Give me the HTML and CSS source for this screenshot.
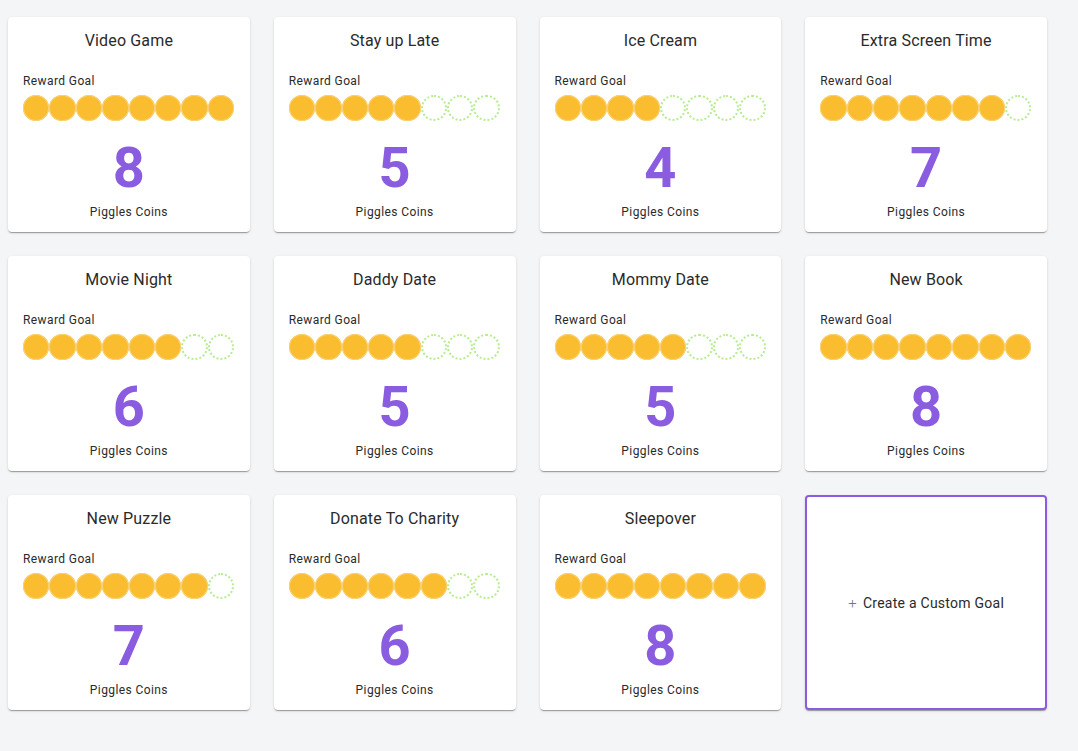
FILE: index.html
```html
<!DOCTYPE html>
<html>
<head>
<meta charset="utf-8">
<link rel="stylesheet" href="styles.css">
</head>
<body>
<div class="grid">
  <div class="card"><div class="title">Video Game</div><div class="label">Reward Goal</div><div class="coins"><span class="coin"></span><span class="coin"></span><span class="coin"></span><span class="coin"></span><span class="coin"></span><span class="coin"></span><span class="coin"></span><span class="coin"></span></div><div class="num">8</div><div class="unit">Piggles Coins</div></div>
  <div class="card"><div class="title">Stay up Late</div><div class="label">Reward Goal</div><div class="coins"><span class="coin"></span><span class="coin"></span><span class="coin"></span><span class="coin"></span><span class="coin"></span><span class="coin empty"></span><span class="coin empty"></span><span class="coin empty"></span></div><div class="num">5</div><div class="unit">Piggles Coins</div></div>
  <div class="card"><div class="title">Ice Cream</div><div class="label">Reward Goal</div><div class="coins"><span class="coin"></span><span class="coin"></span><span class="coin"></span><span class="coin"></span><span class="coin empty"></span><span class="coin empty"></span><span class="coin empty"></span><span class="coin empty"></span></div><div class="num">4</div><div class="unit">Piggles Coins</div></div>
  <div class="card"><div class="title">Extra Screen Time</div><div class="label">Reward Goal</div><div class="coins"><span class="coin"></span><span class="coin"></span><span class="coin"></span><span class="coin"></span><span class="coin"></span><span class="coin"></span><span class="coin"></span><span class="coin empty"></span></div><div class="num">7</div><div class="unit">Piggles Coins</div></div>
  <div class="card"><div class="title">Movie Night</div><div class="label">Reward Goal</div><div class="coins"><span class="coin"></span><span class="coin"></span><span class="coin"></span><span class="coin"></span><span class="coin"></span><span class="coin"></span><span class="coin empty"></span><span class="coin empty"></span></div><div class="num">6</div><div class="unit">Piggles Coins</div></div>
  <div class="card"><div class="title">Daddy Date</div><div class="label">Reward Goal</div><div class="coins"><span class="coin"></span><span class="coin"></span><span class="coin"></span><span class="coin"></span><span class="coin"></span><span class="coin empty"></span><span class="coin empty"></span><span class="coin empty"></span></div><div class="num">5</div><div class="unit">Piggles Coins</div></div>
  <div class="card"><div class="title">Mommy Date</div><div class="label">Reward Goal</div><div class="coins"><span class="coin"></span><span class="coin"></span><span class="coin"></span><span class="coin"></span><span class="coin"></span><span class="coin empty"></span><span class="coin empty"></span><span class="coin empty"></span></div><div class="num">5</div><div class="unit">Piggles Coins</div></div>
  <div class="card"><div class="title">New Book</div><div class="label">Reward Goal</div><div class="coins"><span class="coin"></span><span class="coin"></span><span class="coin"></span><span class="coin"></span><span class="coin"></span><span class="coin"></span><span class="coin"></span><span class="coin"></span></div><div class="num">8</div><div class="unit">Piggles Coins</div></div>
  <div class="card"><div class="title">New Puzzle</div><div class="label">Reward Goal</div><div class="coins"><span class="coin"></span><span class="coin"></span><span class="coin"></span><span class="coin"></span><span class="coin"></span><span class="coin"></span><span class="coin"></span><span class="coin empty"></span></div><div class="num">7</div><div class="unit">Piggles Coins</div></div>
  <div class="card"><div class="title">Donate To Charity</div><div class="label">Reward Goal</div><div class="coins"><span class="coin"></span><span class="coin"></span><span class="coin"></span><span class="coin"></span><span class="coin"></span><span class="coin"></span><span class="coin empty"></span><span class="coin empty"></span></div><div class="num">6</div><div class="unit">Piggles Coins</div></div>
  <div class="card"><div class="title">Sleepover</div><div class="label">Reward Goal</div><div class="coins"><span class="coin"></span><span class="coin"></span><span class="coin"></span><span class="coin"></span><span class="coin"></span><span class="coin"></span><span class="coin"></span><span class="coin"></span></div><div class="num">8</div><div class="unit">Piggles Coins</div></div>
  <div class="card custom"><span class="plus">+</span><span>Create a Custom Goal</span></div>
</div>
</body>
</html>
```

FILE: styles.css
```css
html, body {
  margin: 0;
  padding: 0;
  background: #f4f5f7;
}
body {
  font-family: Roboto, "Noto Sans", sans-serif;
  color: #212121;
}
.grid {
  display: grid;
  grid-template-columns: repeat(4, 1fr);
  grid-auto-rows: 215px;
  column-gap: 24px;
  row-gap: 24px;
  padding: 17px 31px 24px 8px;
}
.card {
  background: #fff;
  border-radius: 4px;
  box-shadow: 0 2px 1px -1px rgba(0,0,0,0.2), 0 1px 1px 0 rgba(0,0,0,0.14), 0 1px 3px 0 rgba(0,0,0,0.12);
  padding: 13px 15px 12px 15px;
  box-sizing: border-box;
  display: flex;
  flex-direction: column;
}
.title {
  font-size: 16px;
  line-height: 22px;
  text-align: center;
  letter-spacing: 0.15px;
  color: #2a2a2a;
}
.label {
  margin-top: 21px;
  font-size: 12px;
  line-height: 16px;
  letter-spacing: 0.4px;
  color: #2a2a2a;
}
.coins {
  margin-top: 6px;
  display: flex;
  align-items: flex-start;
  height: 26.5px;
}
.coin {
  flex: none;
  width: 26.4px;
  height: 26.4px;
  border-radius: 50%;
  background: #fbbd30;
  box-shadow: inset 0 0 0 1px #f7d27a;
  box-sizing: border-box;
}
.coin.empty {
  background: transparent;
  box-shadow: none;
  border: 2px dotted #b8ec90;
}
.num {
  margin-top: 18px;
  font-size: 56px;
  line-height: 56px;
  font-weight: 700;
  text-align: center;
  color: #8a5ce0;
}
.unit {
  margin-top: 8px;
  font-size: 12px;
  line-height: 16px;
  letter-spacing: 0.4px;
  text-align: center;
  color: #2a2a2a;
}
.custom {
  border: 2px solid #8a5ce0;
  flex-direction: row;
  align-items: center;
  justify-content: center;
  font-size: 14px;
  letter-spacing: 0.25px;
  color: #2a2a2a;
  gap: 6px;
  padding-top: 0;
  padding-bottom: 0;
}
.plus {
  color: #777;
  font-size: 15px;
  font-weight: 300;
}
```
